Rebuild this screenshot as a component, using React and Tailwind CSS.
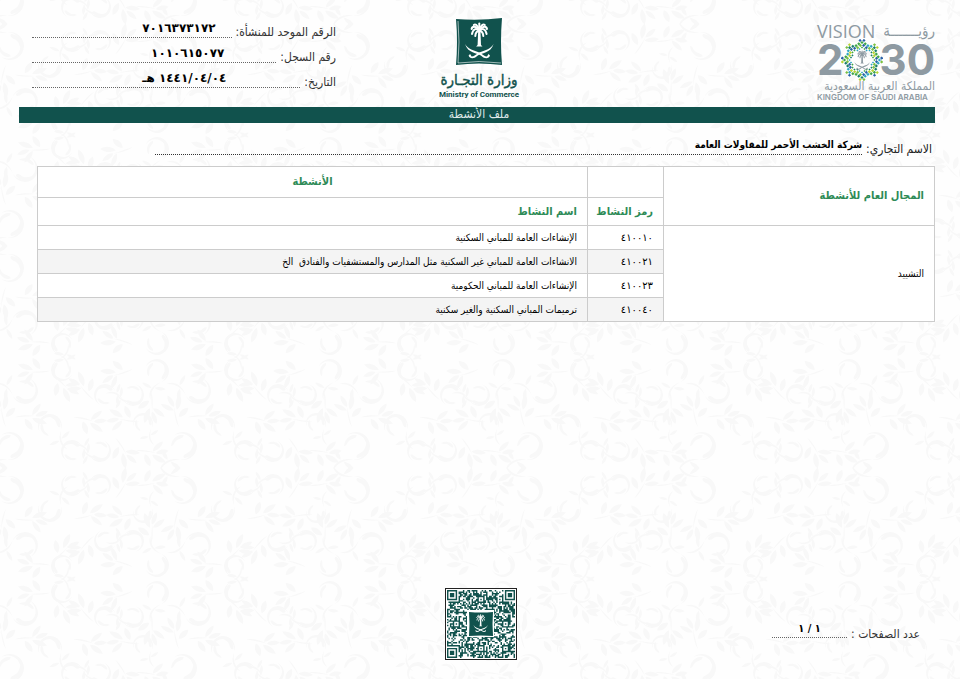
import React from "react";

const GREEN = "#11524d";

const activities = [
  { code: "٤١٠٠١٠", name: "الإنشاءات العامة للمباني السكنية" },
  { code: "٤١٠٠٢١", name: "الانشاءات العامة للمباني غير السكنية مثل المدارس والمستشفيات والفنادق  الخ" },
  { code: "٤١٠٠٢٣", name: "الإنشاءات العامة للمباني الحكومية" },
  { code: "٤١٠٠٤٠", name: "ترميمات المباني السكنية والغير سكنية" },
];

const curls = [
  [25, 77, 13, 20], [50, 42, 12, 160], [10, 22, 14, 80], [72, 17, 11, 200],
  [100, 17, 11, 20], [105, 73, 11, 200], [133, 73, 11, 30], [157, 97, 12, 110],
  [143, 45, 10, 150], [62, 98, 11, 290],
];

const sprays = [
  [62, 82, -25], [88, 46, 5], [85, 80, 150], [118, 96, 215],
  [125, 50, 190], [150, 62, -70], [122, 17, -40], [30, 50, 20],
  [150, 14, 10], [4, 56, 120], [35, 98, 200],
];

const starts = [-173, 0, 173];

function HalfTile() {
  return starts.map((dx) => (
    <g key={dx} transform={`translate(${dx} 0)`}>
      {curls.map(([x, y, r, a], i) => (
        <g key={i} transform={`translate(${x} ${y}) rotate(${a}) scale(${r / 12})`}>
          <path d="M-12 0A12 12 0 1 1 8 9A11.300 11.300 0 1 0-12 0Z" />
          <path d="M-10-3C-8-10 0-13 7-8C2-9-3-8-5-5C-7-2-9-1-10-3Z" />
          <path d="M-2 10C4 11 10 6 9 1C6 1 6 5 3 7C1 8-1 8-2 10Z" />
          <path d="M-12 0C-13 8-18 14-25 16C-17 16.500-11.500 10-12 0Z" />
          <path d="M-15 8C-19 6-21 2-20-2C-17 0-15 4-15 8Z" />
          <path d="M-14 11C-11 11-7 14-6 18C-10 17-13 15-14 11Z" />
        </g>
      ))}
      {sprays.map(([x, y, a], i) => (
        <g key={i} transform={`translate(${x} ${y}) rotate(${a})`}>
          <path d="M-14 6C-6 6 0 3 6 0C0 2-6 3.500-14 6Z" />
          <path d="M6 0C9-3 15-3 19 0C15 3 9 3 6 0Z" />
          <path d="M2-1C3-7 8-11 14-11C12-5 8-2 2-1Z" />
          <path d="M3 2C8 2 13 5 15 10C9 10 5 7 3 2Z" />
          <path d="M-5 1C-8-4-6-9-2-12C1-7-1-2-5 1Z" />
        </g>
      ))}
    </g>
  ));
}

function Backdrop() {
  return (
    <svg className="pointer-events-none absolute inset-0 -z-10 h-full w-full" aria-hidden="true">
      <defs>
        <pattern id="floral" width="173" height="222" y="24" patternUnits="userSpaceOnUse">
          <g fill="#f8f8f8">
            <HalfTile />
            <g transform="translate(0 222) scale(1 -1)">
              <HalfTile />
            </g>
          </g>
        </pattern>
      </defs>
      <rect width="100%" height="100%" fill="#fefefe" />
      <rect width="100%" height="100%" fill="url(#floral)" />
    </svg>
  );
}

function PalmAndSwords() {
  return (
    <g>
      <path d="M23.200 12H25.400L26 27L27.500 28.600H21.100L22.600 27Z" />
      <g fill="none" stroke="currentColor" strokeWidth="2" strokeLinecap="round">
        <path d="M24.300 13C21 9.500 18 11 17 16" />
        <path d="M24.300 12C20 7 17 8.500 16.600 11" />
        <path d="M24.300 12C22 6 20 6 18.800 7" />
        <path d="M24.300 13C21.500 13 20.500 15 20.300 18" />
        <path d="M24.300 12V5.500" />
        <path d="M24.300 13C27.600 9.500 30.600 11 31.600 16" />
        <path d="M24.300 12C28.600 7 31.600 8.500 32 11" />
        <path d="M24.300 12C26.600 6 28.600 6 29.800 7" />
        <path d="M24.300 13C27.100 13 28.100 15 28.300 18" />
      </g>
      <path d="M10 26C13 31.500 19 32 24.300 34.500C28 36.500 29.500 38.500 32 38.500L33.500 36L35 37.500C34 41 29.500 41 26.500 38C22 34.500 13 35.500 10 26Z" />
      <path d="M38.600 26C35.600 31.500 29.600 32 24.300 34.500C20.600 36.500 19.100 38.500 16.600 38.500L15.100 36L13.600 37.500C14.600 41 19.100 41 22.100 38C26.600 34.500 35.600 35.500 38.600 26Z" />
    </g>
  );
}

function MinistryLogo() {
  return (
    <div className="flex flex-col items-center text-[#11524d]">
      <svg className="h-12 w-12" viewBox="0 0 48 48" role="img" aria-label="وزارة التجارة">
        <path d="M1 1Q24 3 47 0Q45 24 47 47Q24 44 1 47Q3 24 1 1Z" fill={GREEN} />
        <path d="M3 3Q5 24 3 45Q24 42 46 45" fill="none" stroke="#fff" strokeWidth=".6" />
        <g className="text-white" fill="currentColor">
          <PalmAndSwords />
        </g>
      </svg>
      <p className="mt-1 text-[15px] leading-5 whitespace-nowrap [-webkit-text-stroke:0.4px_#11524d]">وزارة التجـارة</p>
      <p dir="ltr" className="font-['Roboto',sans-serif] text-[8px] leading-[10px] font-bold whitespace-nowrap">
        Ministry of Commerce
      </p>
    </div>
  );
}

const gems = ["#3fa648", "#7cc142", "#1b7f6b", "#2a62a8", "#2fa7c4", "#b7d433"];

function Star() {
  const items = [];
  [11.5, 14, 16.5, 19].forEach((r, ring) => {
    const n = 28 + (ring > 1 ? 4 : 0);
    for (let i = 0; i < n; i++) {
      const a = ((i + (ring % 2) / 2) / n) * Math.PI * 2;
      const wave = Math.cos(a * 8);
      if (ring === 3 && wave < 0.1) continue;
      const rr = r + wave * 1;
      const x = 21 + Math.sin(a) * rr;
      const y = 21 - Math.cos(a) * rr;
      const s = ring === 0 ? 1.1 : 1.6;
      items.push(
        <path
          key={`${ring}-${i}`}
          d={`M${x} ${y - s}L${x + s} ${y}L${x} ${y + s}L${x - s} ${y}Z`}
          fill={gems[(i * 5 + ring * 3 + ((i * i) % 4)) % gems.length]}
        />
      );
    }
  });
  return (
    <svg className="-mx-1 h-[42px] w-[42px] shrink-0" viewBox="0 0 42 42" aria-hidden="true">
      {items}
      <g className="text-[#8e9aa2]" fill="currentColor" transform="translate(8 9) scale(.54)">
        <PalmAndSwords />
      </g>
    </svg>
  );
}

function VisionLogo() {
  return (
    <div className="flex w-[118px] flex-col text-[#8e9aa2]">
      <div dir="ltr" className="flex h-5 items-center justify-between whitespace-nowrap">
        <span className="font-['Open_Sans',sans-serif] text-[18px] leading-5">VISION</span>
        <span dir="rtl" className="text-[15px] leading-5">رؤيـــــــة</span>
      </div>
      <div dir="ltr" className="flex h-[38px] items-center justify-between font-['Inter',sans-serif] text-[42px] leading-[38px] font-bold">
        <span>2</span>
        <Star />
        <span>30</span>
      </div>
      <p className="text-[12px] leading-[14px] whitespace-nowrap">المملكة العربية السعودية</p>
      <p dir="ltr" className="font-['Inter',sans-serif] text-[8px] leading-[9px] font-semibold whitespace-nowrap">
        KINGDOM OF SAUDI ARABIA
      </p>
    </div>
  );
}

function Field({ label, value, inset }) {
  return (
    <div className="flex h-[25px] items-end gap-1 whitespace-nowrap">
      <dt className="text-[12px] leading-4 text-[#333]">{label}</dt>
      <dd className={`mb-[2px] flex-1 border-b border-dotted border-[#666] font-['DejaVu_Sans',sans-serif] text-[12px] leading-[18px] font-bold text-black ${inset}`}>
        {value}
      </dd>
    </div>
  );
}

const N = 47;

function isOn(x, y) {
  const finder = (fx, fy) => {
    const dx = x - fx;
    const dy = y - fy;
    if (dx < -1 || dy < -1 || dx > 7 || dy > 7) return null;
    const d = Math.max(Math.abs(dx - 3), Math.abs(dy - 3));
    return d === 3 || d <= 1;
  };
  for (const [fx, fy] of [[0, 0], [N - 7, 0], [0, N - 7]]) {
    const f = finder(fx, fy);
    if (f !== null) return f;
  }
  for (const cy of [6, 23, 40]) {
    for (const cx of [6, 23, 40]) {
      const d = Math.max(Math.abs(x - cx), Math.abs(y - cy));
      if (d <= 2) return d !== 1;
    }
  }
  const h = Math.sin(x * 127.1 + y * 311.7) * 43758.5453;
  return h - Math.floor(h) > 0.46;
}

function QrCode() {
  let d = "";
  for (let y = 0; y < N; y++) {
    for (let x = 0; x < N; x++) {
      if (isOn(x, y)) d += `M${x} ${y}h1v1h-1z`;
    }
  }
  return (
    <svg className="h-[72px] w-[72px]" viewBox="0 0 72 72" role="img" aria-label="QR">
      <rect x=".5" y=".5" width="71" height="71" fill="#fff" stroke="#222" />
      <path d={d} fill={GREEN} transform="translate(2 2) scale(1.447)" />
      <rect x="22" y="22" width="27" height="27" fill="#fff" />
      <path d="M24 24Q36 25 48 24Q47 36 48 48Q36 47 24 48Q25 36 24 24Z" fill={GREEN} />
      <g className="text-white" fill="currentColor" transform="translate(23.500 24) scale(.5)">
        <PalmAndSwords />
      </g>
    </svg>
  );
}

const cell = "border border-[#ccc] px-[10px]";
const head = `${cell} text-[11px] leading-5 font-bold text-[#2e8b57]`;

export default function App() {
  return (
    <main
      dir="rtl"
      lang="ar"
      className="relative isolate flex min-h-screen flex-col overflow-hidden pr-[25px] pl-[19px] font-['DejaVu_Sans_Condensed','DejaVu_Sans',sans-serif] text-black"
    >
      <Backdrop />
      <header className="grid h-[107px] grid-cols-[1fr_auto_1fr] items-start pl-1">
        <div className="pt-[21px]">
          <VisionLogo />
        </div>
        <div className="pt-[18px]">
          <MinistryLogo />
        </div>
        <dl className="mr-auto ml-[9px] w-[304px] pt-[15px]">
          <Field label="الرقم الموحد للمنشأة:" value="٧٠١٦٣٧٣١٧٢" inset="ps-[16px]" />
          <Field label="رقم السجل:" value="١٠١٠٦١٥٠٧٧" inset="ps-[52px]" />
          <Field label="التاريخ:" value="١٤٤١/٠٤/٠٤ هـ" inset="ps-[74px]" />
        </dl>
      </header>

      <h1 className="h-4 bg-[#11524d] pl-1 text-center text-[12px] leading-[14px] text-[#dfe9e8]">ملف الأنشطة</h1>

      <section className="mt-3 mr-[3px] ml-[136px] flex h-[22px] items-end gap-1 whitespace-nowrap">
        <h2 className="text-[12px] leading-4 text-[#222]">الاسم التجاري:</h2>
        <p className="mb-[2px] flex-1 border-b border-dotted border-[#333] text-[10px] leading-[18px] font-bold">
          شركة الخشب الأحمر للمقاولات العامة
        </p>
      </section>

      <div className="mt-[9px] ml-[18px]">
        <table className="w-full table-fixed border-collapse bg-white text-start">
          <colgroup>
            <col className="w-[271px]" />
            <col className="w-[76px]" />
            <col />
          </colgroup>
          <thead>
            <tr className="h-[31px]">
              <th rowSpan={2} className={`${head} text-start`}>المجال العام للأنشطة</th>
              <th className={head}></th>
              <th className={head}>الأنشطة</th>
            </tr>
            <tr className="h-7">
              <th className={`${head} text-start whitespace-nowrap`}>رمز النشاط</th>
              <th className={`${head} text-start`}>اسم النشاط</th>
            </tr>
          </thead>
          <tbody className="text-[10px] leading-4">
            {activities.map((a, i) => (
              <tr key={a.code} className="h-[24px] even:bg-[#f4f4f4]">
                {i === 0 && (
                  <td rowSpan={4} className={`${cell} bg-white`}>التشييد</td>
                )}
                <td className={`${cell} font-['DejaVu_Sans',sans-serif]`}>{a.code}</td>
                <td className={`${cell} whitespace-pre`}>{a.name}</td>
              </tr>
            ))}
          </tbody>
        </table>
      </div>

      <footer className="mt-auto grid grid-cols-[1fr_auto_1fr] items-center pb-[19px] pl-2">
        <div className="mt-[14px] mr-[15px] flex w-[148px] items-end gap-1 whitespace-nowrap">
          <span className="text-[12px] leading-4 text-[#333]">عدد الصفحات :</span>
          <span className="mb-1 flex-1 border-b border-dotted border-[#666] text-center text-[11px] leading-4 font-bold">
            ١ / ١
          </span>
        </div>
        <QrCode />
        <div />
      </footer>
    </main>
  );
}
